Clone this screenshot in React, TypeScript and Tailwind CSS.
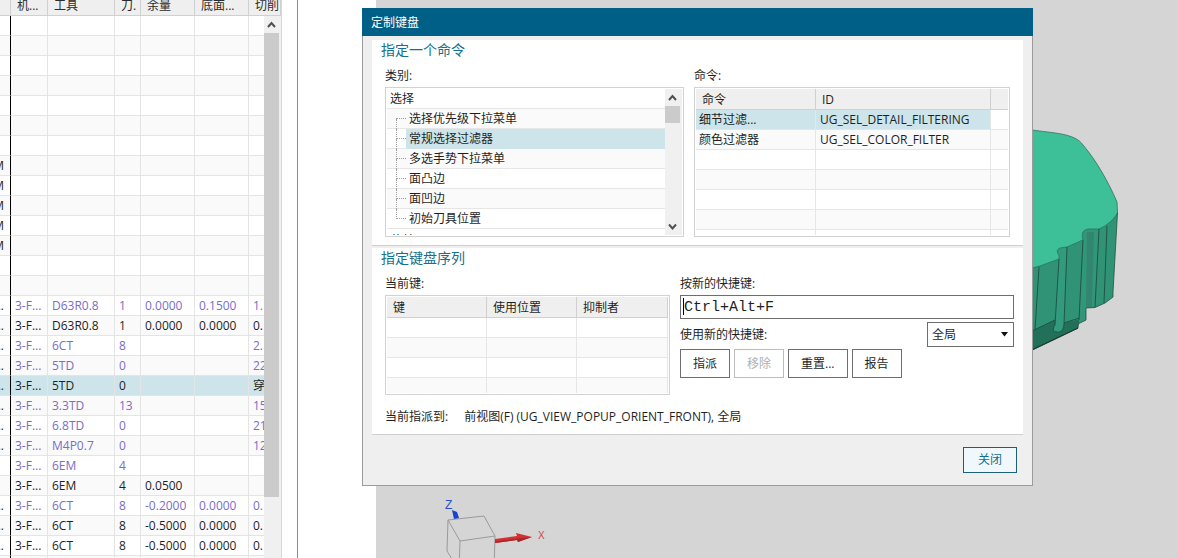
import React from "react";

type Operation = {
  lead?: string;
  machine?: string;
  tool?: string;
  num?: string;
  stock?: string;
  floor?: string;
  cut?: string;
  tone?: "black" | "violet";
  selected?: boolean;
};

const blank: Operation = {};
const program: Operation = { lead: "M" };

const operations: Operation[] = [
  ...Array<Operation>(7).fill(blank),
  ...Array<Operation>(5).fill(program),
  blank,
  blank,
  { lead: "...", machine: "3-F...", tool: "D63R0.8", num: "1", stock: "0.0000", floor: "0.1500", cut: "1.", tone: "violet" },
  { lead: "...", machine: "3-F...", tool: "D63R0.8", num: "1", stock: "0.0000", floor: "0.0000", cut: "0." },
  { lead: "...", machine: "3-F...", tool: "6CT", num: "8", cut: "2.", tone: "violet" },
  { lead: "...", machine: "3-F...", tool: "5TD", num: "0", cut: "22", tone: "violet" },
  { lead: "...", machine: "3-F...", tool: "5TD", num: "0", cut: "穿", selected: true },
  { lead: "...", machine: "3-F...", tool: "3.3TD", num: "13", cut: "15", tone: "violet" },
  { lead: "...", machine: "3-F...", tool: "6.8TD", num: "0", cut: "21", tone: "violet" },
  { lead: "...", machine: "3-F...", tool: "M4P0.7", num: "0", cut: "12", tone: "violet" },
  { machine: "3-F...", tool: "6EM", num: "4", tone: "violet" },
  { machine: "3-F...", tool: "6EM", num: "4", stock: "0.0500" },
  { lead: "...", machine: "3-F...", tool: "6CT", num: "8", stock: "-0.2000", floor: "0.0000", cut: "0.", tone: "violet" },
  { lead: "...", machine: "3-F...", tool: "6CT", num: "8", stock: "-0.5000", floor: "0.0000", cut: "0." },
  { lead: "...", machine: "3-F...", tool: "6CT", num: "8", stock: "-0.5000", floor: "0.0000", cut: "0." },
  blank,
];

const categories = ["选择优先级下拉菜单", "常规选择过滤器", "多选手势下拉菜单", "面凸边", "面凹边", "初始刀具位置"];

function Chevron({ down = false }: { down?: boolean }) {
  return (
    <svg width="9" height="8" viewBox="0 0 9 8" fill="none" stroke="#505050" strokeWidth="2">
      <path d={down ? "M1 1.5 4.5 5.5 8 1.5" : "M1 6 4.5 2 8 6"} />
    </svg>
  );
}

function OperationTable() {
  const headers = ["机...", "工具", "刀.", "余量", "底面...", "切削"];
  return (
    <aside className="relative w-[282px] shrink-0 overflow-hidden border-r border-[#d8d8d8] bg-white">
      <table className="w-full table-fixed border-separate border-spacing-0 text-left">
        <colgroup>
          <col className="w-[11px]" />
          <col className="w-[37px]" />
          <col className="w-[67px]" />
          <col className="w-[26px]" />
          <col className="w-[54px]" />
          <col className="w-[54px]" />
          <col />
        </colgroup>
        <thead>
          <tr className="bg-[#efefef] text-[#2b2b2b]">
            <th className="h-4 border-r border-b border-[#d0d0d0] p-0" />
            {headers.map((h) => (
              <th key={h} className="h-4 border-r border-b border-[#d0d0d0] py-0 pr-0 pl-1.5 align-top font-normal">
                <div className="h-3 leading-3 whitespace-nowrap">{h}</div>
              </th>
            ))}
          </tr>
        </thead>
        <tbody>
          {operations.map((op, i) => (
            <tr
              key={i}
              className={`${op.selected ? "bg-[#cde5ea]" : i % 2 ? "bg-[#fafafa]" : "bg-white"} ${
                op.tone === "violet" ? "text-[#7a6cc8]" : "text-[#1f1f1f]"
              }`}
            >
              <td className="h-5 border-r border-b border-r-black border-b-[#e4e4e4] p-0">
                <div className="flex justify-end overflow-hidden pr-1.5 leading-[19px] text-[#1f1f1f]">{op.lead}</div>
              </td>
              {[op.machine, op.tool, op.num, op.stock, op.floor, op.cut].map((value, j) => (
                <td key={j} className="h-5 border-r border-b border-[#e4e4e4] py-0 pr-0 pl-1">
                  <div className="leading-[19px] whitespace-nowrap">{value}</div>
                </td>
              ))}
            </tr>
          ))}
        </tbody>
      </table>
      <div className="absolute top-4 right-0 bottom-0 flex w-[17px] flex-col bg-[#f0f0f0] pr-0.5">
        <div className="flex h-[17px] shrink-0 items-center justify-center">
          <Chevron />
        </div>
        <div className="h-[464px] bg-[#cbcbcb]" />
      </div>
    </aside>
  );
}

function PartModel() {
  return (
    <svg className="absolute top-[128px] left-[656px]" width="88" height="224" viewBox="1032 128 88 224" strokeLinejoin="round">
      <path
        d="M1032 260 1059 240 1083 228 1117.500 212 1113 292V297L1105 303 1095 307.500 1086 308V320L1078 324V328L1032 350Z"
        fill="#309376"
      />
      <path d="M1032 331 1055 320 1064 323 1080 319 1078 328 1032 350Z" fill="#23705a" />
      <path d="M1083 230H1099L1095 307.500 1086 308V320L1079 322Z" fill="#329679" />
      <path d="M1087 232H1094L1092 307H1086Z" fill="#32866f" />
      <path d="M1057 249 1067 246 1064 324C1064 330 1060 333 1057 332 1053 332 1052 329 1055 325L1059 259Z" fill="#329b7d" />
      <path
        d="M1032 130C1052 133 1075 133 1083 145 1096 160 1109 183 1117 202L1117.500 213C1114 219 1108 225 1099 229L1090 229C1083 229 1081 233 1083 240L1067 247 1060 248C1056 250 1057 252 1059 255V259L1040 266 1032 268Z"
        fill="#3dbf98"
      />
      <path
        d="M1032 130C1052 133 1075 133 1083 145 1096 160 1109 183 1117 202L1117.500 213C1114 219 1108 225 1099 229L1090 229C1083 229 1081 233 1083 240L1067 247 1060 248C1056 250 1057 252 1059 255V259L1040 266 1032 268"
        fill="none"
        stroke="#2b735a"
        strokeWidth=".8"
      />
      <path
        d="M1117.500 213 1113 292V297L1105 303 1095 307.500 1086 308V320L1078 324V328L1032 350"
        fill="none"
        stroke="#1f5041"
        strokeWidth=".8"
      />
      <path d="M1078 328 1032 350" stroke="#1b3d33" strokeWidth="1.2" />
      <path
        d="M1039 267 1035 330M1059 259 1055 325C1052 329 1053 332 1057 332 1060 333 1064 330 1064 324L1067 247M1083 240 1079 320M1099 229 1095 307M1107 226 1104 303M1032 331 1055 320M1064 323 1079 318"
        fill="none"
        stroke="#1d4f3f"
        strokeWidth=".9"
      />
    </svg>
  );
}

function AxisTriad() {
  return (
    <svg className="absolute top-[494px] left-16" width="120" height="64" viewBox="440 494 120 64">
      <path d="M448 520 484 516 495 536 460 541ZM448 520 447 551 459 570M460 541 459 570M495 536 494 570" fill="none" stroke="#9a9a9a" />
      <path d="M452 510 457 512 459 518 454 519Z" fill="#1744cf" />
      <path d="M495 539 517 536 516 533 532 537 518 542 517 540 495 543Z" fill="#d3302f" />
      <path d="M495 541.500 518 538.500 532 537 518 542 517 540 495 543Z" fill="#a8262a" />
      <text x="445" y="509" fontSize="12" fill="#2850d0" fontFamily="Liberation Sans, sans-serif">Z</text>
      <text x="538" y="539" fontSize="10" fill="#d14848" fontFamily="Liberation Sans, sans-serif">X</text>
    </svg>
  );
}

function CategoryTree() {
  return (
    <div className="flex h-[150px] border border-[#d2d2d2] bg-white p-px">
      <ul className="min-w-0 flex-1 overflow-hidden" role="tree" aria-labelledby="category-label">
        <li className="h-5 border-b border-[#e6e6e6] pl-[3px] leading-[19px]" role="treeitem">选择</li>
        {categories.map((name, i) => (
          <li
            key={name}
            role="treeitem"
            aria-selected={i === 1}
            className={`flex h-5 border-b border-[#e6e6e6] pl-[9px] ${i % 2 ? "bg-white" : "bg-[#fafafa]"}`}
          >
            <span className="flex w-2.5 shrink-0 flex-col">
              <span className={`h-2.5 shrink-0 border-b border-dotted border-[#a0a0a0] ${i > 0 ? "border-l" : ""}`} />
              {i < categories.length - 1 && <span className="h-2.5 shrink-0 border-l border-dotted border-[#a0a0a0]" />}
            </span>
            <span className={`h-5 flex-1 pl-[3px] leading-[19px] ${i === 1 ? "bg-[#cde5ea]" : ""}`}>{name}</span>
          </li>
        ))}
        <li className="h-5 pt-0.5 pl-[3px] leading-[19px]" role="treeitem">菜单</li>
      </ul>
      <div className="flex w-[17px] flex-col bg-[#f0f0f0] pr-0.5">
        <div className="flex h-[17px] items-center justify-center"><Chevron /></div>
        <div className="h-[17px] bg-[#cbcbcb]" />
        <div className="mt-auto flex h-[17px] items-center justify-center"><Chevron down /></div>
      </div>
    </div>
  );
}

const headCell = "h-[21px] border-r border-b border-[#d0d0d0] bg-[#efefef] pt-0.5 pb-0 pr-0 pl-1.5 leading-[18px] font-normal";
const bodyCell = "h-5 border-r border-b border-[#e6e6e6] py-0 pr-0 leading-[19px] whitespace-nowrap";
const fieldLabel = "block h-[27px] pt-[7px] leading-[18px]";

function CommandTable() {
  const rows = [["细节过滤...", "UG_SEL_DETAIL_FILTERING"], ["颜色过滤器", "UG_SEL_COLOR_FILTER"], ["", ""], ["", ""], ["", ""], ["", ""], ["", ""]];
  return (
    <div className="h-[150px] overflow-hidden border border-[#d2d2d2] bg-white p-px">
      <div className="h-full overflow-hidden">
        <table className="w-full table-fixed border-separate border-spacing-0 text-left" aria-labelledby="command-label">
          <colgroup>
            <col className="w-[120px]" />
            <col className="w-[175px]" />
            <col />
          </colgroup>
          <thead>
            <tr>
              <th className={headCell}>命令</th>
              <th className={headCell}>ID</th>
              <th className="border-b border-[#d0d0d0] bg-[#efefef] p-0" />
            </tr>
          </thead>
          <tbody>
            {rows.map(([name, id], i) => (
              <tr key={i} className={i % 2 ? "bg-[#fafafa]" : "bg-white"}>
                <td className={`${bodyCell} pl-[3px] ${i === 0 ? "bg-[#cde5ea]" : ""}`}>{name}</td>
                <td className={`${bodyCell} pl-1 ${i === 0 ? "bg-[#cde5ea]" : ""}`}>{id}</td>
                <td className="border-b border-[#e6e6e6] p-0" />
              </tr>
            ))}
          </tbody>
        </table>
      </div>
    </div>
  );
}

function CurrentKeysTable() {
  return (
    <div className="h-[100px] overflow-hidden border border-[#d2d2d2] bg-white p-px">
      <div className="h-full overflow-hidden">
        <table className="w-full table-fixed border-separate border-spacing-0 text-left" aria-labelledby="keys-label">
          <colgroup>
            <col className="w-[100px]" />
            <col className="w-[90px]" />
            <col />
          </colgroup>
          <thead>
            <tr>
              <th className={headCell}>键</th>
              <th className={headCell}>使用位置</th>
              <th className={headCell}>抑制者</th>
            </tr>
          </thead>
          <tbody>
            {[0, 1, 2, 3].map((i) => (
              <tr key={i} className={i % 2 ? "bg-[#fafafa]" : "bg-white"}>
                <td className={bodyCell} />
                <td className={bodyCell} />
                <td className={bodyCell} />
              </tr>
            ))}
          </tbody>
        </table>
      </div>
    </div>
  );
}

const button = "h-[29px] border border-[#6e6e6e] bg-white px-3 pt-px text-[#1f1f1f] disabled:border-[#bdbdbd] disabled:text-[#b0b0b0]";

function KeyboardDialog() {
  return (
    <section
      role="dialog"
      aria-labelledby="dialog-title"
      className="absolute top-2 left-[362px] flex w-[671px] flex-col border-x border-b border-[#9b9b9b] bg-[#efefef]"
    >
      <h1 id="dialog-title" className="-mx-px h-7 bg-[#005f87] pt-px pl-[9px] leading-7 text-white">定制键盘</h1>

      <div className="mx-[9px] mt-1 border-b border-[#cfcfcf] bg-white px-[13px] pb-2">
        <h2 className="-ml-1 h-5 text-sm leading-5 text-[#14708c]">指定一个命令</h2>
        <div className="flex gap-2.5">
          <div className="w-[299px]">
            <div id="category-label" className={fieldLabel}>类别:</div>
            <CategoryTree />
          </div>
          <div className="w-[316px]">
            <div id="command-label" className={fieldLabel}>命令:</div>
            <CommandTable />
          </div>
        </div>
      </div>

      <div className="mx-[9px] mt-0.5 border-b border-[#cfcfcf] bg-white pr-[9px] pb-2 pl-[13px]">
        <h2 className="-ml-1 h-5 text-sm leading-5 text-[#14708c]">指定键盘序列</h2>
        <div className="flex gap-2.5">
          <div className="w-[285px]">
            <div id="keys-label" className={fieldLabel}>当前键:</div>
            <CurrentKeysTable />
          </div>
          <div className="min-w-0 flex-1">
            <label htmlFor="shortcut" className={fieldLabel}>按新的快捷键:</label>
            <div className="relative">
              <input
                id="shortcut"
                defaultValue="Ctrl+Alt+F"
                className="block h-6 w-full border border-[#6e6e6e] bg-white px-[3px] font-['Liberation_Mono',monospace] text-[15px] text-[#1f1f1f] outline-none"
              />
              <span className="absolute top-[3px] left-[3px] h-[17px] w-px bg-black" />
            </div>
            <div className="mt-[3px] flex items-center justify-between">
              <label htmlFor="scope" className="pt-px">使用新的快捷键:</label>
              <div className="relative">
                <select id="scope" className="block h-[25px] w-[87px] appearance-none border border-[#6e6e6e] bg-white pl-1 text-[#1f1f1f]">
                  <option>全局</option>
                </select>
                <svg className="pointer-events-none absolute top-2.5 right-1.5" width="7" height="5" viewBox="0 0 7 5">
                  <path d="M0 0H7L3.500 4.500Z" fill="#111" />
                </svg>
              </div>
            </div>
            <div className="mt-0.5 flex gap-1">
              <button type="button" className={button}>指派</button>
              <button type="button" className={button} disabled>移除</button>
              <button type="button" className={button}>重置...</button>
              <button type="button" className={button}>报告</button>
            </div>
          </div>
        </div>
        <p className="mt-[13px] flex gap-4 leading-[18px]">
          <span>当前指派到:</span>
          <span>前视图(F) (UG_VIEW_POPUP_ORIENT_FRONT), 全局</span>
        </p>
      </div>

      <div className="flex justify-end py-3 pr-[15px]">
        <button type="button" className="h-[26px] w-[54px] border border-[#1c5f78] bg-[#f1f8fb] text-[#14708c]">关闭</button>
      </div>
    </section>
  );
}

export default function App() {
  return (
    <main className="relative flex h-screen overflow-hidden bg-white font-['Open_Sans','Noto_Sans_CJK_SC',sans-serif] text-xs text-[#1f1f1f]">
      <OperationTable />
      <div className="ml-[15px] w-[79px] shrink-0 border-l border-[#8c8c8c]" />
      <div className="relative min-w-0 flex-1 overflow-hidden bg-[#d5d5d5]">
        <PartModel />
        <AxisTriad />
      </div>
      <KeyboardDialog />
    </main>
  );
}
